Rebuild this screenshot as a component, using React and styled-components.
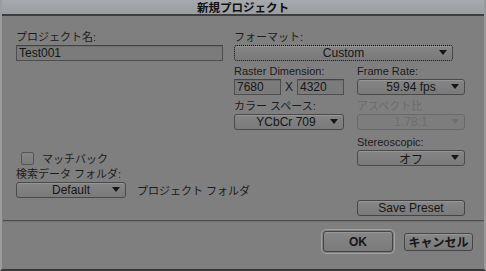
import React from 'react'
import styled, { createGlobalStyle } from 'styled-components'

const Global = createGlobalStyle`
  html, body { margin: 0; padding: 0; background: #2e2e2e; }
  body { font-family: "Liberation Sans", "Noto Sans CJK JP", sans-serif; }
`

const Window = styled.div`
  width: 486px;
  height: 271px;
  display: flex;
  flex-direction: column;
  background: #7f7f7f;
  box-sizing: border-box;
  border-left: 2px solid #9c9c9c;
  border-right: 2px solid #9a9a9a;
  border-bottom: 2px solid #3a3a3a;
  color: #1c1c1c;
  font-size: 11px;
  overflow: hidden;
`

const TitleBar = styled.div`
  height: 14px;
  margin: 0 -2px;
  background: linear-gradient(#a6a9ad, #9a9da1);
  border-bottom: 2px solid #3e3e3e;
  display: flex;
  align-items: center;
  justify-content: center;
  font-weight: 700;
  font-size: 11.5px;
  color: #111;
  font-family: "Noto Sans CJK JP", sans-serif;
`

const Body = styled.div`
  display: grid;
  grid-template-columns: 207px 110px 110px;
  column-gap: 11px;
  grid-template-rows: 29px 16px 18px 16px 19px 16px 20px 16px 16px 16px 2px 16px;
  padding-left: 14px;
  & > :nth-child(n) { min-width: 0; }
`

const Label = styled.div`
  grid-column: ${p => p.col};
  grid-row: ${p => p.row};
  align-self: end;
  line-height: 13px;
  margin-bottom: 1px;
  white-space: nowrap;
  color: ${p => (p.disabled ? '#6c6c6c' : '#1c1c1c')};
  font-family: "Liberation Sans", "Noto Sans CJK JP", sans-serif;
`

const Cell = styled.div`
  grid-column: ${p => p.col};
  grid-row: ${p => p.row};
  display: flex;
  align-items: center;
  gap: ${p => p.gap || 0}px;
  margin-left: ${p => p.shift || 0}px;
`

const TextField = styled.div`
  box-sizing: border-box;
  width: ${p => p.w}px;
  height: ${p => p.h || 16}px;
  border: 1px solid #4e4e4e;
  border-top-color: #444;
  background: #7b7b7b;
  padding-left: 2px;
  display: flex;
  align-items: center;
  font-size: 12px;
  color: #161616;
  box-shadow: inset 0 1px 0 #6e6e6e;
`

const Select = styled.div`
  position: relative;
  box-sizing: border-box;
  width: ${p => p.w}px;
  height: 16px;
  border: 1px ${p => (p.focus ? 'dotted #111' : 'solid #4a4a4a')};
  border-color: ${p => (p.disabled ? '#6a6a6a' : p.focus ? '#111' : '#4a4a4a')};
  border-radius: 3px;
  background: ${p => (p.disabled ? '#7d7d7d' : 'linear-gradient(#858585, #7a7a7a)')};
  box-shadow: ${p => (p.disabled ? 'none' : 'inset 0 1px 0 #959595')};
  display: flex;
  align-items: center;
  justify-content: center;
  padding-right: ${p => p.pr || 0}px;
  font-size: 12px;
  color: ${p => (p.disabled ? '#6e6e6e' : '#161616')};
  white-space: nowrap;
  &::after {
    content: '';
    position: absolute;
    right: 5px;
    top: 4px;
    border-left: 4px solid transparent;
    border-right: 4px solid transparent;
    border-top: 5px solid ${p => (p.disabled ? '#6e6e6e' : '#161616')};
  }
`

const Times = styled.span`
  width: 16px;
  text-align: center;
  font-size: 12px;
`

const Check = styled.div`
  width: 11px;
  height: 11px;
  border: 1px solid #555;
  border-radius: 2px;
  background: linear-gradient(#858585, #7b7b7b);
  margin-left: 5px;
`

const Button = styled.div`
  box-sizing: border-box;
  width: ${p => p.w}px;
  height: ${p => p.h || 16}px;
  border: 1px solid #454545;
  border-radius: 3px;
  background: linear-gradient(#878787, #7a7a7a);
  box-shadow: inset 0 1px 0 #979797;
  display: flex;
  align-items: center;
  justify-content: center;
  font-size: 12px;
  font-weight: ${p => (p.bold ? 700 : 400)};
  color: #161616;
  font-family: "Liberation Sans", "Noto Sans CJK JP", sans-serif;
`

const Focus = styled.div`
  padding: 1px;
  border: 1px solid #a2a2a2;
  border-radius: 5px;
`

const Divider = styled.div`
  margin-top: 4px;
  margin-left: 1px;
  height: 1px;
  background: #4c4c4c;
  border-bottom: 1px solid #727272;
`

const Footer = styled.div`
  display: flex;
  justify-content: flex-end;
  align-items: center;
  gap: 9px;
  padding: 7px 11px 0 0;
`

export default function App() {
  return (
    <>
      <Global />
      <Window>
        <TitleBar>新規プロジェクト</TitleBar>
        <Body>
          <Label col="1" row="1">プロジェクト名:</Label>
          <Cell col="1" row="2"><TextField w={207}>Test001</TextField></Cell>

          <Label col="2 / 4" row="1">フォーマット:</Label>
          <Cell col="2 / 4" row="2"><Select w={219} focus>Custom</Select></Cell>

          <Label col="2" row="3">Raster Dimension:</Label>
          <Cell col="2 / 4" row="4">
            <TextField w={47}>7680</TextField>
            <Times>X</Times>
            <TextField w={47}>4320</TextField>
          </Cell>

          <Label col="3" row="3" style={{ marginLeft: 2 }}>Frame Rate:</Label>
          <Cell col="3" row="4" shift={2}><Select w={110}>59.94 fps</Select></Cell>

          <Label col="2" row="5">カラー スペース:</Label>
          <Cell col="2" row="6"><Select w={110} pr={6}>YCbCr 709</Select></Cell>

          <Label col="3" row="5" disabled style={{ marginLeft: 2 }}>アスペクト比</Label>
          <Cell col="3" row="6" shift={2}><Select w={110} disabled>1.78:1</Select></Cell>

          <Label col="3" row="7" style={{ marginLeft: 2 }}>Stereoscopic:</Label>
          <Cell col="3" row="8" shift={2}><Select w={110}>オフ</Select></Cell>

          <Cell col="1" row="8" gap={8}>
            <Check />
            <span>マッチバック</span>
          </Cell>

          <Label col="1" row="9">検索データ フォルダ:</Label>
          <Cell col="1 / 3" row="10" gap={11}>
            <Select w={110}>Default</Select>
            <span>プロジェクト フォルダ</span>
          </Cell>

          <Cell col="3" row="12" shift={2}><Button w={110}>Save Preset</Button></Cell>
        </Body>
        <Divider />
        <Footer>
          <Focus><Button w={70} h={21} bold>OK</Button></Focus>
          <Button w={69} h={18} bold>キャンセル</Button>
        </Footer>
      </Window>
    </>
  )
}
